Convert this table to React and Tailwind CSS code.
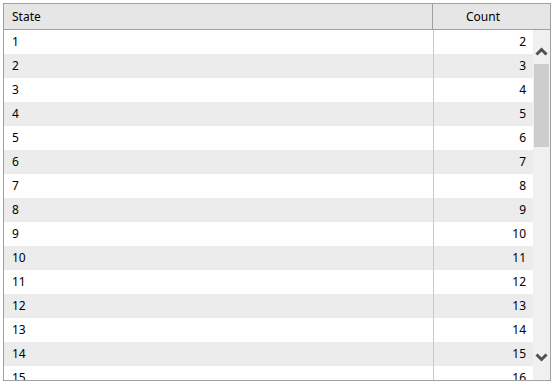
export default function App() {
  const rows = Array.from({ length: 15 }, (_, i) => i + 1);
  return (
    <div className="w-[557px] h-[385px] bg-white pt-[3px] pl-[3px]" style={{ fontFamily: '"Noto Sans", "Open Sans", sans-serif' }}>
      <div className="w-[548px] h-[378px] border border-[#a0a0a0] flex flex-col overflow-hidden text-[12px] text-black">
        <div className="h-[26px] shrink-0 flex bg-[#e6e6e6] border-b border-[#a0a0a0]">
          <div className="w-[429px] border-r border-[#a0a0a0] pl-[8px] flex items-center">State</div>
          <div className="w-[100px] flex items-center justify-center">Count</div>
        </div>
        <div className="flex flex-1 min-h-0">
          <div className="flex-1 overflow-hidden">
            {rows.map((n) => (
              <div key={n} className={`h-[24px] flex ${n % 2 === 0 ? "bg-[#ececec]" : "bg-white"}`}>
                <div className="w-[429px] pl-[8px] flex items-center">{n}</div>
                <div className="w-px bg-[#c8c8c8]"></div>
                <div className="flex-1 pr-[7px] flex items-center justify-end">{n + 1}</div>
              </div>
            ))}
          </div>
          <div className="w-[17px] shrink-0 bg-[#f0f0f0] flex flex-col items-center">
            <div className="h-[34px] w-full flex items-center justify-center pt-[8px]">
              <svg width="13" height="9" viewBox="0 0 13 9" className="block shrink-0">
                <polyline points="1.5,7.5 6.5,2.5 11.5,7.5" fill="none" stroke="#505050" strokeWidth="3" strokeLinecap="butt" strokeLinejoin="miter" />
              </svg>
            </div>
            <div className="w-[15px] h-[83px] bg-[#cdcdcd]"></div>
            <div className="flex-1"></div>
            <div className="h-[34px] w-full flex items-center justify-center pb-[12px]">
              <svg width="13" height="9" viewBox="0 0 13 9" className="block shrink-0">
                <polyline points="1.5,1.5 6.5,6.5 11.5,1.5" fill="none" stroke="#505050" strokeWidth="3" strokeLinecap="butt" strokeLinejoin="miter" />
              </svg>
            </div>
          </div>
        </div>
      </div>
    </div>
  );
}
